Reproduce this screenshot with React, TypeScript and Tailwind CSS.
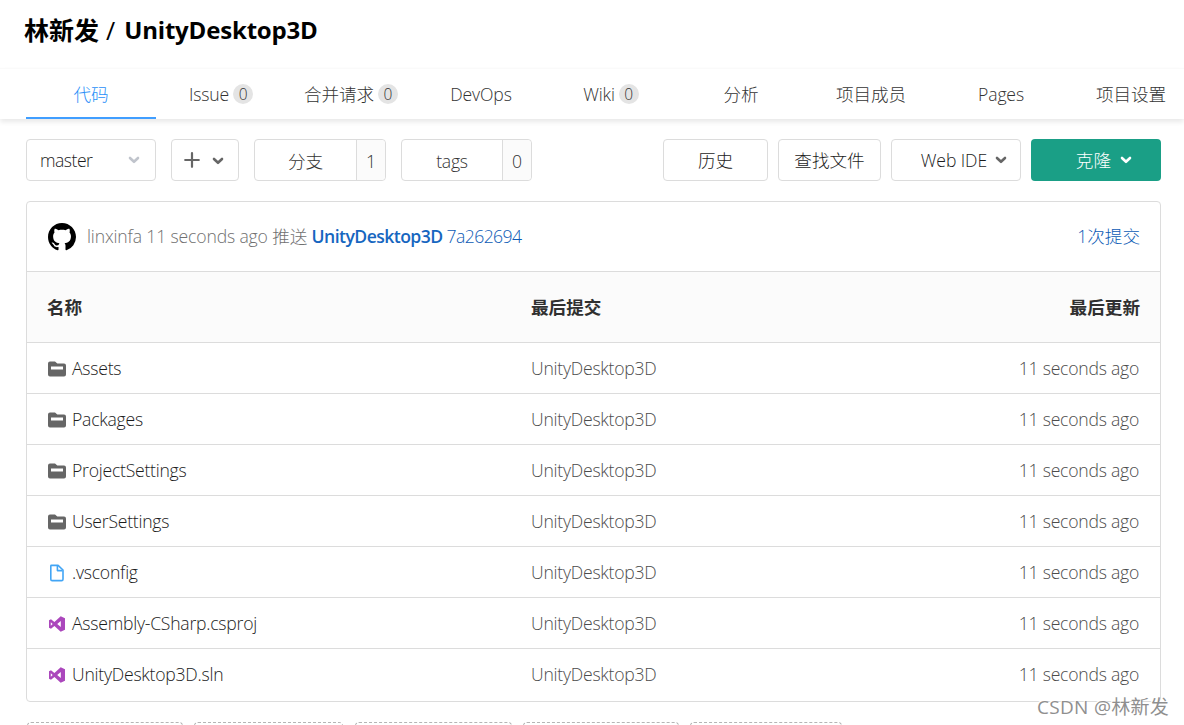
import clsx from "clsx";

type IconProps = { className?: string };

const tabs = [
    { label: "代码", active: true },
    { label: "Issue", count: 0 },
    { label: "合并请求", count: 0 },
    { label: "DevOps" },
    { label: "Wiki", count: 0 },
    { label: "分析" },
    { label: "项目成员" },
    { label: "Pages" },
    { label: "项目设置" },
];

const files = [
    { name: "Assets", type: "folder" },
    { name: "Packages", type: "folder" },
    { name: "ProjectSettings", type: "folder" },
    { name: "UserSettings", type: "folder" },
    { name: ".vsconfig", type: "file" },
    { name: "Assembly-CSharp.csproj", type: "vs" },
    { name: "UnityDesktop3D.sln", type: "vs" },
];

const Chevron = ({ className }: IconProps) => (
    <svg viewBox="0 0 12 8" className={clsx("h-2 w-3 shrink-0", className)} fill="none" stroke="currentColor" strokeWidth="2.6" strokeLinecap="round" strokeLinejoin="round">
        <path d="M2 2l4 3.8L10 2" />
    </svg>
);

const Github = () => (
    <svg viewBox="0 0 16 16" className="mt-[3px] h-7 w-7 shrink-0" fill="#000">
        <path d="M8 0C3.58 0 0 3.58 0 8c0 3.54 2.29 6.53 5.47 7.59.4.07.55-.17.55-.38 0-.19-.01-.82-.01-1.49-2.01.37-2.53-.49-2.69-.94-.09-.23-.48-.94-.82-1.13-.28-.15-.68-.52-.01-.53.63-.01 1.08.58 1.23.82.72 1.21 1.87.87 2.33.66.07-.52.28-.87.51-1.07-1.78-.2-3.64-.89-3.64-3.95 0-.87.31-1.59.82-2.15-.08-.2-.36-1.02.08-2.12 0 0 .67-.21 2.2.82.64-.18 1.32-.27 2-.27s1.36.09 2 .27c1.53-1.04 2.2-.82 2.2-.82.44 1.1.16 1.92.08 2.12.51.56.82 1.27.82 2.15 0 3.07-1.87 3.75-3.65 3.95.29.25.54.73.54 1.48 0 1.07-.01 1.93-.01 2.2 0 .21.15.46.55.38A8.01 8.01 0 0 0 16 8c0-4.42-3.58-8-8-8z" />
    </svg>
);

const FileIcon = ({ type }: { type: string }) => {
    if (type === "folder") {
        return (
            <svg viewBox="0 0 18 16" className="mt-[2px] h-4 w-[18px] shrink-0" fill="#666">
                <path fillRule="evenodd" d="M2 .5h5L9.3 2.4H16a2 2 0 0 1 2 2v9.1a2 2 0 0 1-2 2H2a2 2 0 0 1-2-2v-11a2 2 0 0 1 2-2zM3 5.6v2.8h12V5.6z" />
            </svg>
        );
    }
    if (type === "file") {
        return (
            <svg viewBox="0 0 18 18" className="mt-[2px] h-[18px] w-[18px] shrink-0" fill="none" stroke="#42a5f5" strokeWidth="1.6" strokeLinejoin="round">
                <path d="M3.4 1.4h6.7l4.9 4.6v9.2a1.4 1.4 0 0 1-1.4 1.4H4.2a1.4 1.4 0 0 1-1.4-1.4V2a.6.6 0 0 1 .6-.6z" />
                <path d="M9.4 1.8v4.8h5" />
            </svg>
        );
    }
    return (
        <svg viewBox="0 0 18 18" className="mt-[2px] h-[18px] w-[18px] shrink-0" fill="#ab47bc">
            <path fillRule="evenodd" d="M12.7 1.2l4.3 2v11.6l-4.3 2-6.3-5.7L3 13.7l-2-1V5.3l2-1 3.4 2.6zM12.8 6L9.2 9l3.6 3zM2.8 7.3v3.4L4.7 9z" />
        </svg>
    );
};

function App() {
    return (
        <div className="h-[725px] w-[1184px] overflow-hidden bg-white font-['Open_Sans','Noto_Sans_CJK_SC',sans-serif] text-[17.6px] leading-[26px] font-light text-[#1c1c1c]">
            <h1 className="flex h-[68px] items-start pt-3 pl-6 text-[25px] leading-9 font-bold whitespace-pre text-black">
                <span>林新发</span>
                <span className="ml-[7px] font-normal">/</span>
                <span className="ml-[9px] text-[24px] tracking-[-0.18px]">UnityDesktop3D</span>
            </h1>

            <nav className="flex h-[51px] border-t border-[#fafafa] pl-[26px] shadow-[0_3px_5px_rgba(0,0,0,0.09)]">
                {tabs.map((tab) => (
                    <div
                        key={tab.label}
                        className={clsx(
                            "flex w-[130px] shrink-0 items-center justify-center border-b-2 pt-[2px]",
                            tab.active ? "border-[#409eff] text-[#2a90f8]" : "border-transparent text-[#333]"
                        )}
                    >
                        <span className="-mt-px tracking-[-0.15px]">{tab.label}</span>
                        {tab.count !== undefined && (
                            <span className="ml-1 flex h-5 w-5 items-center justify-center rounded-full bg-[#e4e4e4] text-[15.5px]">
                                {tab.count}
                            </span>
                        )}
                    </div>
                ))}
            </nav>

            <div className="flex h-[82px] items-start pt-5 pr-[23px] pl-[26px]">
                <button className="flex h-[42px] w-[130px] items-center justify-between rounded border border-[#dcdcdc] pr-[15px] pl-[13px]">
                    <span className="tracking-[-0.5px]">master</span>
                    <Chevron className="text-[#c0c4cc]" />
                </button>
                <button className="ml-[15px] flex h-[42px] w-[68px] items-center justify-center gap-[12px] rounded border border-[#dcdcdc] pr-[2px] text-[#666]">
                    <svg viewBox="0 0 16 16" className="h-4 w-4 shrink-0" stroke="currentColor" strokeWidth="2.2" strokeLinecap="round">
                        <path d="M8 1.2v13.6M1.2 8h13.6" />
                    </svg>
                    <Chevron className="mt-px" />
                </button>
                <div className="ml-[15px] flex h-[42px] w-[132px] items-stretch rounded border border-[#dcdcdc] text-[#333]">
                    <span className="flex w-[102px] items-center justify-center border-r border-[#dcdcdc] pt-px">分支</span>
                    <span className="flex flex-1 items-center justify-center rounded-r bg-[#fbfbfb] pt-[2px]">1</span>
                </div>
                <div className="ml-[15px] flex h-[42px] w-[131px] items-stretch rounded border border-[#dcdcdc] text-[#333]">
                    <span className="flex w-[101px] items-center justify-center border-r border-[#dcdcdc] pt-[2px] tracking-[-0.2px]">tags</span>
                    <span className="flex flex-1 items-center justify-center rounded-r bg-[#fbfbfb] pt-[2px]">0</span>
                </div>

                <div className="ml-auto flex gap-[10px]">
                    <button className="h-[42px] w-[105px] rounded border border-[#dcdcdc]">历史</button>
                    <button className="h-[42px] w-[103px] rounded border border-[#dcdcdc]">查找文件</button>
                    <button className="flex h-[42px] w-[130px] items-center justify-end gap-2 rounded border border-[#dcdcdc] pr-[13px]">
                        <span className="tracking-[-0.1px]">Web IDE</span>
                        <Chevron className="text-[#666]" />
                    </button>
                    <button className="flex h-[42px] w-[130px] items-center justify-end gap-[9px] rounded bg-[#1a9f86] pr-[29px] text-white">
                        <span>克隆</span>
                        <Chevron />
                    </button>
                </div>
            </div>

            <section className="ml-[26px] h-[501px] w-[1135px] rounded border border-[#dcdcdc]">
                <div className="flex h-[69px] items-center pr-5 pb-[2px] pl-[21px] text-[#707070]">
                    <Github />
                    <p className="ml-[11px] whitespace-pre">
                        <span className="tracking-[-0.15px]">linxinfa 11 seconds ago 推送 </span>
                        <a className="font-semibold tracking-[-0.55px] text-[#1666c0]">UnityDesktop3D</a>
                        <a className="tracking-[-0.6px] text-[#0d5bb5]"> 7a262694</a>
                    </p>
                    <a className="ml-auto text-[#0d5bb5]">1次提交</a>
                </div>
                <div className="flex h-[72px] items-center border-y border-[#dcdcdc] bg-[#fbfbfb] px-5 font-bold text-[#303030]">
                    <span className="w-[484px]">名称</span>
                    <span>最后提交</span>
                    <span className="ml-auto">最后更新</span>
                </div>
                {files.map((file) => (
                    <div key={file.name} className="flex h-[51px] items-center border-b border-[#dcdcdc] px-[21px] tracking-[-0.24px] last:border-b-0 last:h-[50px]">
                        <div className="flex w-[483px] items-center gap-[6px]">
                            <FileIcon type={file.type} />
                            <span>{file.name}</span>
                        </div>
                        <span className="text-[#4c4c4c]">UnityDesktop3D</span>
                        <span className="ml-auto text-[#4c4c4c]">11 seconds ago</span>
                    </div>
                ))}
            </section>

            <div className="mt-5 flex pl-[27px]">
                <div className="h-10 w-[156px] rounded border border-dashed border-[#b5b5b5]" />
                <div className="ml-[11px] h-10 w-[149px] rounded border border-dashed border-[#b5b5b5]" />
                <div className="ml-3 h-10 w-[157px] rounded border border-dashed border-[#b5b5b5]" />
                <div className="ml-[11px] h-10 w-[156px] rounded border border-dashed border-[#b5b5b5]" />
                <div className="ml-[11px] h-10 w-[152px] rounded border border-dashed border-[#b5b5b5]" />
            </div>

            <div className="absolute top-[694px] left-[1037px] text-[19px] font-normal tracking-[0.3px] whitespace-pre text-[#8f8f8f] [text-shadow:-1px_-1px_0_#fff]">
                CSDN @林新发
            </div>
        </div>
    );
}

export default App;
